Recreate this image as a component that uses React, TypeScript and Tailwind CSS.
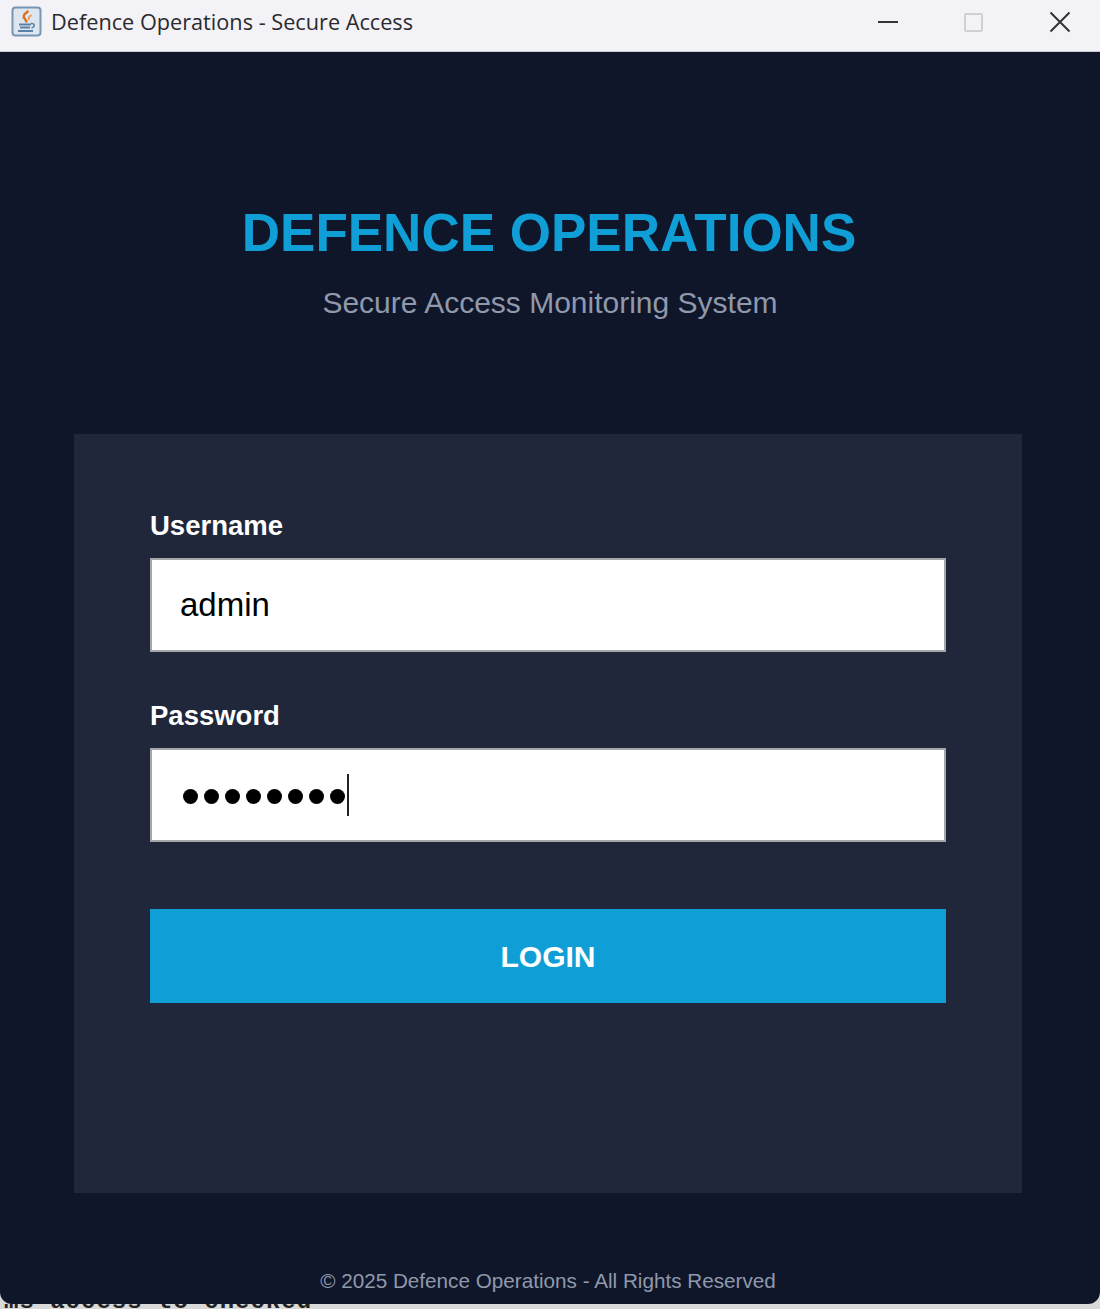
import React from 'react';

const JavaIcon = () => (
  <svg width="32" height="32" viewBox="0 0 32 32" className="shrink-0">
    <rect x="1.5" y="1.5" width="28" height="28" rx="3" fill="#dde6ef" stroke="#7896b3" strokeWidth="2" />
    <path d="M17.500 5c-5 3.500-6 5.500-3.500 8 1.200 1.300 1.500 2.300 1 3.500" fill="none" stroke="#dd6f22" strokeWidth="2.400" />
    <path d="M20.500 9c-2.500 1.500-3.500 3-2.500 5" fill="none" stroke="#e99a57" strokeWidth="1.800" />
    <path d="M8 18.500h12M9 21.500h10M7 25h15" stroke="#5a82a8" strokeWidth="1.800" fill="none" />
    <path d="M20 17.500c4-.5 4.500 3.500 .5 4.500" stroke="#5a82a8" strokeWidth="1.500" fill="none" />
  </svg>
);

const Field = ({ label, children, className }: { label: string; children: React.ReactNode; className?: string }) => (
  <div className={className}>
    <div className="h-[53px] pt-[5px] text-[27.500px] leading-[32px] font-bold text-white">{label}</div>
    <div className="flex h-[94px] w-[796px] items-center border-2 border-[#a4a6aa] bg-white pl-[29px] text-black">
      {children}
    </div>
  </div>
);

export default function App() {
  return (
    <div className="flex h-[1309px] w-[1100px] flex-col overflow-hidden bg-[#d9d9d9] font-['Liberation_Sans',Arial,sans-serif]">
      {/* Title bar */}
      <div className="flex h-[52px] shrink-0 items-center border-b border-[#c9c9d0] bg-[#f3f2f6] pr-[29px] pb-[7px] pl-[11px]">
        <JavaIcon />
        <span className="ml-[8px] font-['Open_Sans',sans-serif] text-[21.700px] leading-none text-[#2a2a2e]">
          Defence Operations - Secure Access
        </span>
        <div className="ml-auto flex items-center">
          <div className="h-[2px] w-[20px] bg-[#333]" />
          <div className="ml-[66px] h-[19px] w-[19px] rounded-[2px] border-2 border-[#d0d0d4]" />
          <svg width="22" height="22" viewBox="0 0 22 22" className="ml-[66px]">
            <path d="M1.500 1.500l19 19M20.500 1.500l-19 19" stroke="#333" strokeWidth="2" />
          </svg>
        </div>
      </div>

      {/* Window body */}
      <div className="flex h-[1252px] shrink-0 flex-col items-center rounded-b-[12px] bg-[#10162a]">
        <h1 className="mt-[150px] h-[62px] -translate-x-[1px] text-[53px] leading-[62px] font-bold text-[#0f9fd6]">DEFENCE OPERATIONS</h1>
        <p className="mt-[21px] h-[36px] text-[30px] leading-[36px] text-[#8f99ab]">Secure Access Monitoring System</p>

        <div className="mt-[113px] h-[759px] w-[948px] -translate-x-[2px] bg-[#20273a] pt-[71px] pl-[76px]">
          <Field label="Username">
            <span className="-mt-[2px] -ml-[1px] text-[33px] leading-none">admin</span>
          </Field>
          <Field label="Password" className="mt-[43px]">
            <span className="mt-[2px] ml-[2px] flex items-center gap-[6px]">
              {[0, 1, 2, 3, 4, 5, 6, 7].map(i => (
                <span key={i} className="h-[15px] w-[15px] rounded-full bg-black" />
              ))}
            </span>
            <span className="ml-[2px] h-[42px] w-[2px] bg-[#222]" />
          </Field>
          <button className="mt-[67px] h-[94px] w-[796px] bg-[#0f9fd6] text-[30px] font-bold text-white">LOGIN</button>
        </div>

        <p className="mt-[75px] -translate-x-[2px] text-[20.700px] leading-[26px] text-[#8f99ab]">© 2025 Defence Operations - All Rights Reserved</p>
      </div>

      {/* Sliver of whatever is behind the window */}
      <div className="h-[5px] overflow-hidden pl-[4px] font-['Liberation_Mono',monospace] text-[24px] leading-[14px] font-bold tracking-[1px] whitespace-nowrap text-[#222]">
        <span className="relative -top-[9px]">ms access to checked</span>
      </div>
    </div>
  );
}
